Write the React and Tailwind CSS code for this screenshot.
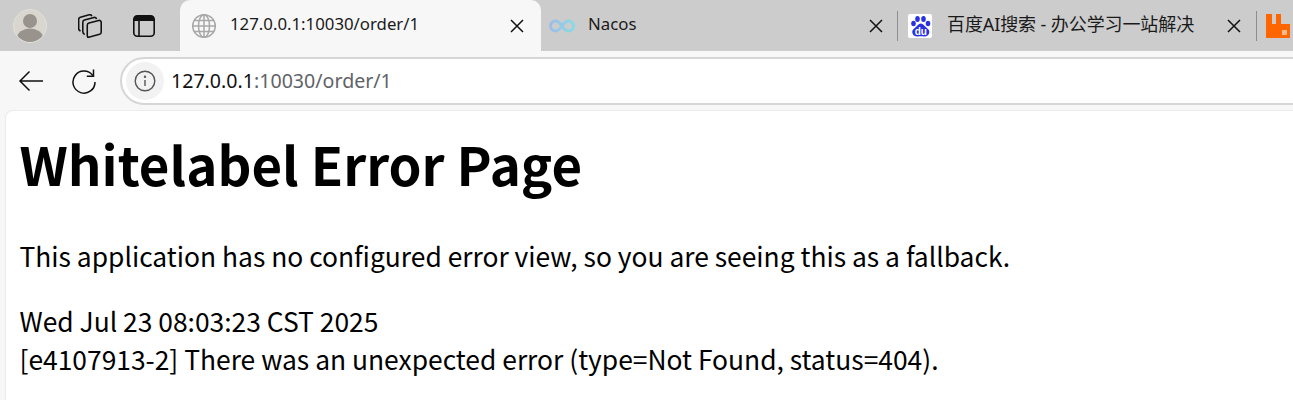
import React from "react";

const X = () => (
  <svg width="14" height="14" viewBox="0 0 14 14" fill="none" stroke="#111" strokeWidth="1.5"><path d="M1 1l12 12M13 1L1 13" /></svg>
);

const Globe = () => (
  <svg width="26" height="26" viewBox="0 0 26 26" fill="none" stroke="#a8a8a8" strokeWidth="1.5">
    <circle cx="13" cy="13" r="11.3" />
    <ellipse cx="13" cy="13" rx="5.500" ry="11.3" />
    <path d="M13 1.700v22.600M1.700 13h22.600M3.200 7.500h19.600M3.200 18.500h19.600" />
  </svg>
);

const Avatar = () => (
  <svg width="34" height="34" viewBox="0 0 34 34">
    <circle cx="17" cy="17" r="16.5" fill="#d9d6d0" stroke="#e2e0da" />
    <clipPath id="av"><circle cx="17" cy="17" r="16" /></clipPath>
    <g clipPath="url(#av)" fill="#98938c">
      <circle cx="17" cy="12" r="7" />
      <ellipse cx="17" cy="29" rx="13" ry="9.5" />
    </g>
  </svg>
);

const Collections = () => (
  <svg width="24" height="24" viewBox="2.200 2.200 21.500 21.500" fill="none" stroke="#111" strokeWidth="1.400" strokeLinejoin="round">
    <path d="M11 23.200l10.500-2.800c1-.3 1.500-1 1.500-2V9.700c0-1.200-1-2-2.200-1.700L12 10.300c-1 .3-1.500 1-1.500 2v9.200c0 1.100.6 1.900 1.500 1.700z" />
    <path d="M8.200 20.500C7 20 6.500 19.300 6.500 18.200V9.700c0-1.100.5-1.800 1.500-2.100L16.500 5.300c1.200-.3 2 .3 2.300 1.500" />
    <path d="M4.500 17.500C3.300 17 2.800 16.300 2.800 15.200V7.200c0-1.100.5-1.800 1.500-2.100l8-2.200c1.200-.3 2 .2 2.300 1.300" />
  </svg>
);

const TabsIcon = () => (
  <svg width="22" height="22" viewBox="1 1 22 22" fill="none">
    <rect x="1.800" y="1.800" width="20.400" height="20.400" rx="3.500" stroke="#111" strokeWidth="1.600" />
    <path d="M1.800 5.300a3.500 3.500 0 0 1 3.500-3.500h13.400a3.500 3.500 0 0 1 3.500 3.500V7H1.800z" fill="#111" />
    <path d="M7 7v15" stroke="#111" strokeWidth="1.600" />
  </svg>
);

const Back = () => (
  <svg width="26" height="22" viewBox="0 0 26 22" fill="none" stroke="#111" strokeWidth="1.500"><path d="M25 11H2M11.500 1.500L2 11l9.500 9.500" /></svg>
);

const Reload = () => (
  <svg width="26" height="26" viewBox="0 0 26 26" fill="none" stroke="#111" strokeWidth="1.500">
    <path d="M21.800 7.500A11 11 0 1 0 24 14" />
    <path d="M22.500 1.500v6.700h-6.700" />
  </svg>
);

const Info = () => (
  <svg width="22" height="22" viewBox="0 0 22 22" fill="none" stroke="#555" strokeWidth="1.400">
    <circle cx="11" cy="11" r="9.800" />
    <path d="M11 10v6" />
    <circle cx="11" cy="6.800" r="0.500" fill="#555" />
  </svg>
);

const Nacos = () => (
  <svg width="26" height="14" viewBox="0 0 26 14" fill="none" strokeWidth="3">
    <defs>
      <linearGradient id="nc" x1="0" x2="1" y1="0" y2="0">
        <stop offset="0" stopColor="#9dbde8" />
        <stop offset="1" stopColor="#86dbe6" />
      </linearGradient>
    </defs>
    <path d="M13 7c-2-3-3.500-5-6.500-5a5 5 0 0 0 0 10c3 0 4.500-2 6.500-5s3.500-5 6.500-5a5 5 0 0 1 0 10c-3 0-4.500-2-6.500-5z" stroke="url(#nc)" />
  </svg>
);

const Baidu = () => (
  <svg width="24" height="24" viewBox="0 0 24 24" className="rounded-[2px]">
    <rect width="24" height="24" fill="#fff" />
    <g fill="#2932e1">
      <ellipse cx="5.500" cy="9.500" rx="2.300" ry="2.800" />
      <ellipse cx="9.500" cy="5" rx="2.300" ry="3" />
      <ellipse cx="15.500" cy="5" rx="2.300" ry="3" />
      <ellipse cx="20" cy="9.500" rx="2.300" ry="2.800" />
      <path d="M12.800 9.500c-2.500 0-3.500 2.500-5.500 4-2 1.500-3.300 3-3 5 .4 2.800 2.800 4.200 5.500 4 1.200-.1 2-.3 3-.3s1.800.2 3 .3c2.700.2 5.100-1.200 5.500-4 .3-2-1-3.500-3-5-2-1.500-3-4-5.500-4z" />
    </g>
    <text x="12.800" y="21" textAnchor="middle" fontSize="10" fontWeight="700" fontFamily="Liberation Sans, sans-serif" fill="#fff">du</text>
  </svg>
);

const Rabbit = () => (
  <svg width="24" height="24" viewBox="0 0 24 24">
    <path d="M0 0h6v10h4V0h5v10h9v14H0z" fill="#ff6600" />
    <rect x="16" y="16" width="5" height="5" fill="#f9b98a" />
  </svg>
);

export default function App() {
  return (
    <div className="w-[1293px] h-[400px] overflow-hidden bg-[#f7f7f7] font-['Noto_Sans','Noto_Sans_CJK_SC',sans-serif]">
      <div className="h-[51px] flex bg-[#cccccc] overflow-hidden">
        <div className="w-[180px] shrink-0 flex items-center">
          <div className="ml-[13px]"><Avatar /></div>
          <div className="ml-[31px]"><Collections /></div>
          <div className="ml-[31px]"><TabsIcon /></div>
        </div>
        <div className="w-[361px] shrink-0 flex items-center bg-[#f7f7f7] rounded-t-[10px] pl-[11px] pr-[17px]">
          <Globe />
          <span className="ml-[13px] flex-1 text-[16.800px] leading-[24px] pb-[3px] text-[#1a1a1a]">127.0.0.1:10030/order/1</span>
          <X />
        </div>
        <div className="w-[356px] shrink-0 flex items-center pl-[8px] pr-[14px]">
          <Nacos />
          <span className="ml-[13px] flex-1 text-[16.800px] leading-[24px] pb-[3px] text-[#1a1a1a]">Nacos</span>
          <X />
        </div>
        <div className="w-px h-[30px] self-center bg-[#8e8e8e] shrink-0" />
        <div className="w-[358px] shrink-0 flex items-center pl-[10px] pr-[15px]">
          <Baidu />
          <span className="ml-[15px] flex-1 text-[18px] leading-[24px] pb-[3px] tracking-[-0.100px] text-[#1a1a1a]">百度AI搜索 - 办公学习一站解决</span>
          <X />
        </div>
        <div className="w-px h-[30px] self-center bg-[#8e8e8e] shrink-0" />
        <div className="shrink-0 flex items-center pl-[9px]"><Rabbit /></div>
      </div>
      <div className="h-[59px] flex items-center">
        <div className="ml-[18px]"><Back /></div>
        <div className="ml-[27px]"><Reload /></div>
        <div className="ml-[23px] flex-1 h-[48px] -mr-8 flex items-center bg-white border-2 border-[#d6d6d6] rounded-full pl-[4px]">
          <div className="w-[38px] h-[38px] rounded-full bg-[#f2f2f2] flex items-center justify-center shrink-0"><Info /></div>
          <span className="ml-[7px] text-[19.600px] text-[#111]">127.0.0.1<span className="text-[#5f6368]">:10030/order/1</span></span>
        </div>
      </div>
      <div className="ml-[5px] h-[290px] bg-white rounded-tl-[8px] border-t border-l border-[#ececec] pl-[13.500px] text-black font-['Noto_Sans_CJK_SC',sans-serif]">
        <h1 className="mt-[18.500px] text-[52.800px] leading-[66px] font-bold">Whitelabel Error Page</h1>
        <p className="mt-[41.500px] text-[26.400px] leading-[38px]">This application has no configured error view, so you are seeing this as a fallback.</p>
        <p className="mt-[27px] text-[26.400px] leading-[38px]">Wed Jul 23 08:03:23 CST 2025</p>
        <p className="text-[26.400px] leading-[38px]">[e4107913-2] There was an unexpected error (type=Not Found, status=404).</p>
      </div>
    </div>
  );
}
